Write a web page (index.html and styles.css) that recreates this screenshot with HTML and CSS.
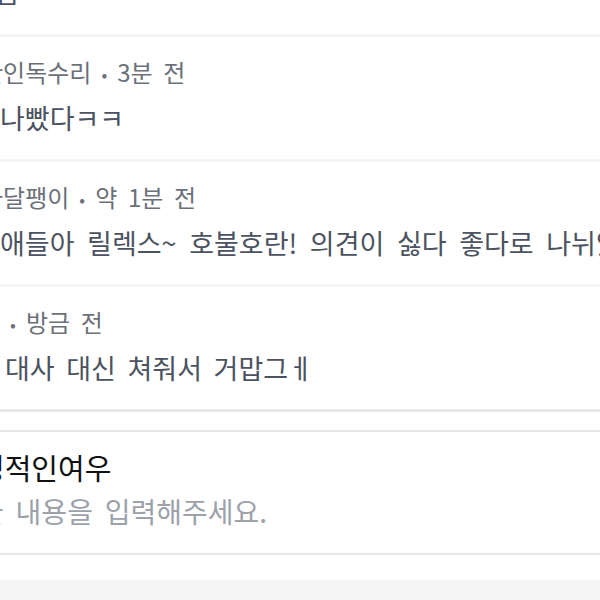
FILE: index.html
```html
<!DOCTYPE html>
<html lang="ko">
<head>
<meta charset="utf-8">
<link rel="stylesheet" href="styles.css">
</head>
<body>
<div class="page">
  <div class="head"><span class="head-text">님</span></div>
  <div class="sep"></div>
  <div class="comment">
    <div class="meta"><span class="clip">한</span>인독수리<span class="dot">•</span>3분 전</div>
    <div class="content">나빴다ㅋㅋ</div>
  </div>
  <div class="sep"></div>
  <div class="comment">
    <div class="meta"><span class="clip">사</span>달팽이<span class="dot">•</span>약 1분 전</div>
    <div class="content">애들아 릴렉스~ 호불호란! 의견이 싫다 좋다로 나뉘었다는 거</div>
  </div>
  <div class="sep"></div>
  <div class="comment">
    <div class="meta"><span class="clip clip-far">곰</span><span class="dot">•</span>방금 전</div>
    <div class="content content-indent">대사 대신 쳐줘서 거맙그ㅔ</div>
  </div>
  <div class="sep sep-dark"></div>
  <div class="gap"></div>
  <div class="input-box">
    <div class="nick"><span class="clip clip-nick">정</span>적인여우</div>
    <div class="placeholder"><span class="clip clip-ph">글</span> 내용을 입력해주세요.</div>
  </div>
  <div class="gap gap-bottom"></div>
  <div class="footer"></div>
</div>
</body>
</html>
```
FILE: styles.css
```css
html, body {
  margin: 0;
  padding: 0;
  background: #ffffff;
  overflow: hidden;
}
body {
  width: 600px;
  height: 600px;
  font-family: "Noto Sans CJK KR", "Noto Sans", sans-serif;
}
.page {
  width: 600px;
  overflow: hidden;
  white-space: nowrap;
}
.head {
  height: 34px;
  overflow: hidden;
}
.head-text {
  display: block;
  font-size: 27px;
  line-height: 26px;
  margin-top: -21px;
  margin-left: -6px;
  color: #4b5260;
}
.sep {
  height: 3px;
  background: #f4f5f7;
}
.sep-dark {
  background: #e5e7eb;
}
.comment {
  padding: 20px 0 25px 0;
  height: 77px;
  overflow: hidden;
}
.meta {
  font-size: 24px;
  line-height: 30px;
  height: 30px;
  color: #6b7079;
  word-spacing: 4px;
}
.clip {
  display: inline-block;
  margin-left: -19px;
}
.clip-far {
  margin-left: -22px;
}
.clip-nick {
  margin-left: -22px;
}
.clip-ph {
  margin-left: -22px;
}
.dot {
  display: inline-block;
  font-size: 17px;
  margin: 0 10px 0 10px;
  vertical-align: 1px;
}
.content {
  margin-top: 15px;
  font-size: 27px;
  line-height: 32px;
  height: 32px;
  color: #4b5260;
  word-spacing: 5px;
}
.content-indent {
  padding-left: 5px;
  word-spacing: 4px;
}
.gap {
  height: 18px;
}
.input-box {
  border-top: 2px solid #e6e7ea;
  border-bottom: 2px solid #e6e7ea;
  padding: 18px 0 23px 0;
  height: 80px;
}
.nick {
  font-size: 29px;
  line-height: 34px;
  height: 34px;
  color: #111111;
}
.placeholder {
  margin-top: 10px;
  font-size: 28px;
  line-height: 34px;
  height: 34px;
  color: #9ca1aa;
  word-spacing: 4px;
}
.gap-bottom {
  height: 25px;
}
.footer {
  height: 40px;
  background: #f5f5f5;
}
```
